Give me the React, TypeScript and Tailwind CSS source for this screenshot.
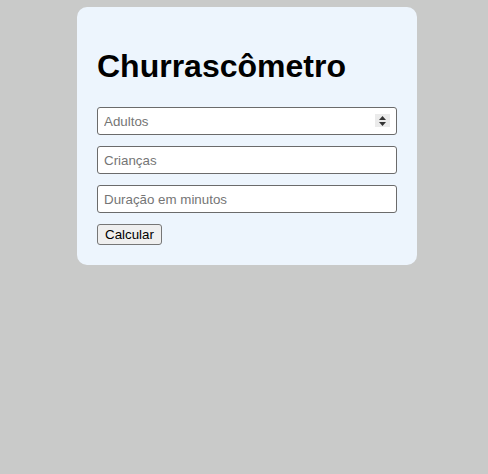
export default function App() {
  return (
    <div className="min-h-[474px] bg-[#c9cac9] pt-[7px] font-['Liberation_Sans',Arial,sans-serif]">
      <div className="ml-[77px] w-[340px] rounded-[10px] bg-[#edf5fd] p-5">
        <h1 className="mt-[21px] mb-[22px] text-[32px] leading-[37px] font-bold text-black">Churrascômetro</h1>
        <form className="flex flex-col gap-[11px]" onSubmit={(e) => e.preventDefault()}>
          <div className="relative">
            <input
              type="number"
              placeholder="Adultos"
              className="h-[28px] w-full rounded-[3px] border border-[#6b6b6b] bg-white px-[6px] text-[13.333px] text-black placeholder:text-[#757575]"
            />
            <span className="pointer-events-none absolute top-[7px] right-[7px] flex h-[13px] w-[15px] items-center justify-center bg-[#ebebeb]">
              <svg width="7" height="10" viewBox="0 0 7 10">
                <path d="M3.5 0 L7 4 H0 Z" fill="#333" />
                <path d="M0 6 H7 L3.5 10 Z" fill="#333" />
              </svg>
            </span>
          </div>
          <input
            type="number"
            placeholder="Crianças"
            className="h-[28px] w-full rounded-[3px] border border-[#6b6b6b] bg-white px-[6px] text-[13.333px] text-black placeholder:text-[#757575]"
          />
          <input
            type="number"
            placeholder="Duração em minutos"
            className="h-[28px] w-full rounded-[3px] border border-[#6b6b6b] bg-white px-[6px] text-[13.333px] text-black placeholder:text-[#757575]"
          />
          <div className="flex">
            <button
              type="submit"
              className="h-[21px] rounded-[3px] border border-[#767676] bg-[#efefef] px-[7px] text-[13.333px] leading-[17px] text-black"
            >
              Calcular
            </button>
          </div>
        </form>
      </div>
    </div>
  )
}
